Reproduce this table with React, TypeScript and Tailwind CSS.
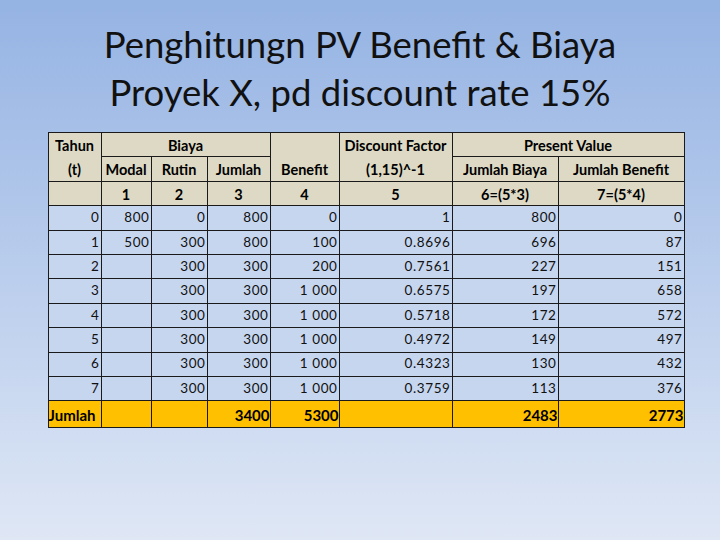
import React from 'react';

// Tabel PV: biaya, benefit dan discount factor 15%
const rows = [
  { t: 0, modal: '800', rutin: '0', jumlah: '800', benefit: '0', df: '1', pvB: '800', pvBen: '0' },
  { t: 1, modal: '500', rutin: '300', jumlah: '800', benefit: '100', df: '0.8696', pvB: '696', pvBen: '87' },
  { t: 2, modal: '', rutin: '300', jumlah: '300', benefit: '200', df: '0.7561', pvB: '227', pvBen: '151' },
  { t: 3, modal: '', rutin: '300', jumlah: '300', benefit: '1 000', df: '0.6575', pvB: '197', pvBen: '658' },
  { t: 4, modal: '', rutin: '300', jumlah: '300', benefit: '1 000', df: '0.5718', pvB: '172', pvBen: '572' },
  { t: 5, modal: '', rutin: '300', jumlah: '300', benefit: '1 000', df: '0.4972', pvB: '149', pvBen: '497' },
  { t: 6, modal: '', rutin: '300', jumlah: '300', benefit: '1 000', df: '0.4323', pvB: '130', pvBen: '432' },
  { t: 7, modal: '', rutin: '300', jumlah: '300', benefit: '1 000', df: '0.3759', pvB: '113', pvBen: '376' },
];

const head = 'border border-[#1a1a1a] bg-[#ddd9c4] font-bold text-center text-[14.5px] h-[24.4px] p-0 pt-[3px]';
const cell = 'border border-[#1a1a1a] bg-[#c6d6ef] text-right text-[13.5px] text-[#111] h-[24.4px] p-0 pr-[1px] tracking-[0.6px]';
const foot = 'border border-[#1a1a1a] bg-[#ffc000] font-bold text-[15px] h-[27px] p-0 pt-[2px]';

export default function App() {
  return (
    <div
      className="w-[720px] h-[540px] bg-gradient-to-b from-[#95b3e3] to-[#dfe7f5] flex flex-col items-center text-black"
      style={{ fontFamily: 'Lato, "Noto Sans", sans-serif' }}
    >
      <h1 className="mt-[20px] text-[36.5px] leading-[48px] text-center font-normal text-[#111]">
        Penghitungn PV Benefit &amp; Biaya
        <br />
        Proyek X, pd discount rate 15%
      </h1>

      <table className="mt-[16px] ml-[12px] table-fixed border-collapse leading-none">
        <colgroup>
          <col className="w-[53px]" />
          <col className="w-[50px]" />
          <col className="w-[56px]" />
          <col className="w-[63px]" />
          <col className="w-[69px]" />
          <col className="w-[113px]" />
          <col className="w-[106px]" />
          <col className="w-[126px]" />
        </colgroup>
        <thead>
          <tr>
            <th className={`${head} border-b-0`}>Tahun</th>
            <th className={head} colSpan={3}>Biaya</th>
            <th className={`${head} border-b-0`}></th>
            <th className={`${head} border-b-0`}>Discount Factor</th>
            <th className={head} colSpan={2}>Present Value</th>
          </tr>
          <tr>
            <th className={`${head} border-t-0`}>(t)</th>
            <th className={head}>Modal</th>
            <th className={head}>Rutin</th>
            <th className={head}>Jumlah</th>
            <th className={`${head} border-t-0`}>Benefit</th>
            <th className={`${head} border-t-0`}>(1,15)^-1</th>
            <th className={head}>Jumlah Biaya</th>
            <th className={head}>Jumlah Benefit</th>
          </tr>
          <tr>
            <th className={head}></th>
            <th className={head}>1</th>
            <th className={head}>2</th>
            <th className={head}>3</th>
            <th className={head}>4</th>
            <th className={head}>5</th>
            <th className={head}>6=(5*3)</th>
            <th className={head}>7=(5*4)</th>
          </tr>
        </thead>
        <tbody>
          {rows.map((r) => (
            <tr key={r.t}>
              <td className={cell}>{r.t}</td>
              <td className={cell}>{r.modal}</td>
              <td className={cell}>{r.rutin}</td>
              <td className={cell}>{r.jumlah}</td>
              <td className={cell}>{r.benefit}</td>
              <td className={cell}>{r.df}</td>
              <td className={cell}>{r.pvB}</td>
              <td className={cell}>{r.pvBen}</td>
            </tr>
          ))}
          <tr>
            <td className={`${foot} text-left`}>Jumlah</td>
            <td className={foot}></td>
            <td className={foot}></td>
            <td className={`${foot} text-right`}>3400</td>
            <td className={`${foot} text-right`}>5300</td>
            <td className={foot}></td>
            <td className={`${foot} text-right`}>2483</td>
            <td className={`${foot} text-right`}>2773</td>
          </tr>
        </tbody>
      </table>
    </div>
  );
}
